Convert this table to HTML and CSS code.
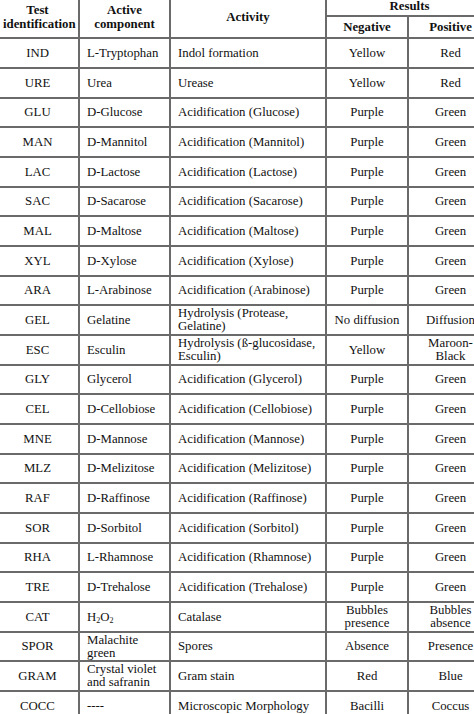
FILE: index.html
```html
<!DOCTYPE html>
<html>
<head>
<meta charset="utf-8">
<link rel="stylesheet" href="styles.css">
</head>
<body>
<div class="frame">
<table class="tbl">
<colgroup>
<col class="c1"><col class="c2"><col class="c3"><col class="c4"><col class="c5">
</colgroup>
<thead>
<tr class="h1">
<th rowspan="2" class="hd">Test<br>identification</th>
<th rowspan="2" class="hd">Active<br>component</th>
<th rowspan="2">Activity</th>
<th colspan="2" class="res">Results</th>
</tr>
<tr class="h2">
<th>Negative</th>
<th>Positive</th>
</tr>
</thead>
<tbody>
<tr><td>IND</td><td>L-Tryptophan</td><td>Indol formation</td><td>Yellow</td><td>Red</td></tr>
<tr><td>URE</td><td>Urea</td><td>Urease</td><td>Yellow</td><td>Red</td></tr>
<tr><td>GLU</td><td>D-Glucose</td><td>Acidification (Glucose)</td><td>Purple</td><td>Green</td></tr>
<tr><td>MAN</td><td>D-Mannitol</td><td>Acidification (Mannitol)</td><td>Purple</td><td>Green</td></tr>
<tr><td>LAC</td><td>D-Lactose</td><td>Acidification (Lactose)</td><td>Purple</td><td>Green</td></tr>
<tr><td>SAC</td><td>D-Sacarose</td><td>Acidification (Sacarose)</td><td>Purple</td><td>Green</td></tr>
<tr><td>MAL</td><td>D-Maltose</td><td>Acidification (Maltose)</td><td>Purple</td><td>Green</td></tr>
<tr><td>XYL</td><td>D-Xylose</td><td>Acidification (Xylose)</td><td>Purple</td><td>Green</td></tr>
<tr><td>ARA</td><td>L-Arabinose</td><td>Acidification (Arabinose)</td><td>Purple</td><td>Green</td></tr>
<tr><td>GEL</td><td>Gelatine</td><td>Hydrolysis (Protease,<br>Gelatine)</td><td>No diffusion</td><td>Diffusion</td></tr>
<tr><td>ESC</td><td>Esculin</td><td>Hydrolysis (ß-glucosidase,<br>Esculin)</td><td>Yellow</td><td>Maroon-<br>Black</td></tr>
<tr><td>GLY</td><td>Glycerol</td><td>Acidification (Glycerol)</td><td>Purple</td><td>Green</td></tr>
<tr><td>CEL</td><td>D-Cellobiose</td><td>Acidification (Cellobiose)</td><td>Purple</td><td>Green</td></tr>
<tr><td>MNE</td><td>D-Mannose</td><td>Acidification (Mannose)</td><td>Purple</td><td>Green</td></tr>
<tr><td>MLZ</td><td>D-Melizitose</td><td>Acidification (Melizitose)</td><td>Purple</td><td>Green</td></tr>
<tr><td>RAF</td><td>D-Raffinose</td><td>Acidification (Raffinose)</td><td>Purple</td><td>Green</td></tr>
<tr><td>SOR</td><td>D-Sorbitol</td><td>Acidification (Sorbitol)</td><td>Purple</td><td>Green</td></tr>
<tr><td>RHA</td><td>L-Rhamnose</td><td>Acidification (Rhamnose)</td><td>Purple</td><td>Green</td></tr>
<tr><td>TRE</td><td>D-Trehalose</td><td>Acidification (Trehalose)</td><td>Purple</td><td>Green</td></tr>
<tr><td>CAT</td><td>H<sub>2</sub>O<sub>2</sub></td><td>Catalase</td><td>Bubbles<br>presence</td><td>Bubbles<br>absence</td></tr>
<tr><td>SPOR</td><td>Malachite<br>green</td><td>Spores</td><td>Absence</td><td>Presence</td></tr>
<tr><td>GRAM</td><td>Crystal violet<br>and safranin</td><td>Gram stain</td><td>Red</td><td>Blue</td></tr>
<tr><td>COCC</td><td>----</td><td>Microscopic Morphology</td><td>Bacilli</td><td>Coccus</td></tr>
</tbody>
</table>
</div>
</body>
</html>
```
FILE: styles.css
```css
html, body {
  margin: 0;
  padding: 0;
  background: #ffffff;
}
.frame {
  width: 474px;
  height: 714px;
  overflow: hidden;
}
.tbl {
  margin-top: -5px;
  margin-left: -5px;
  border-collapse: collapse;
  table-layout: fixed;
  width: 497px;
  font-family: "Liberation Serif", "Times New Roman", serif;
  font-size: 12.8px;
  line-height: 13px;
  color: #111111;
}
.c1 { width: 83px; }
.c2 { width: 91px; }
.c3 { width: 156px; }
.c4 { width: 82px; }
.c5 { width: 85px; }
.tbl th, .tbl td {
  border: 2px solid #6a6a6a;
  padding: 0 6px;
  vertical-align: middle;
  white-space: nowrap;
  text-align: center;
}
.tbl th {
  font-weight: bold;
}
.tbl th.hd {
  line-height: 14.5px;
}
.h1 { height: 20px; }
.h2 { height: 22px; }
.tbl tbody tr { height: 30px; }
.tbl tbody tr:nth-child(3n) { height: 29px; }
.tbl td:nth-child(2), .tbl td:nth-child(3) {
  text-align: left;
  padding-left: 7px;
}
.tbl sub {
  font-size: 8px;
  line-height: 0;
  vertical-align: -2px;
}
```
